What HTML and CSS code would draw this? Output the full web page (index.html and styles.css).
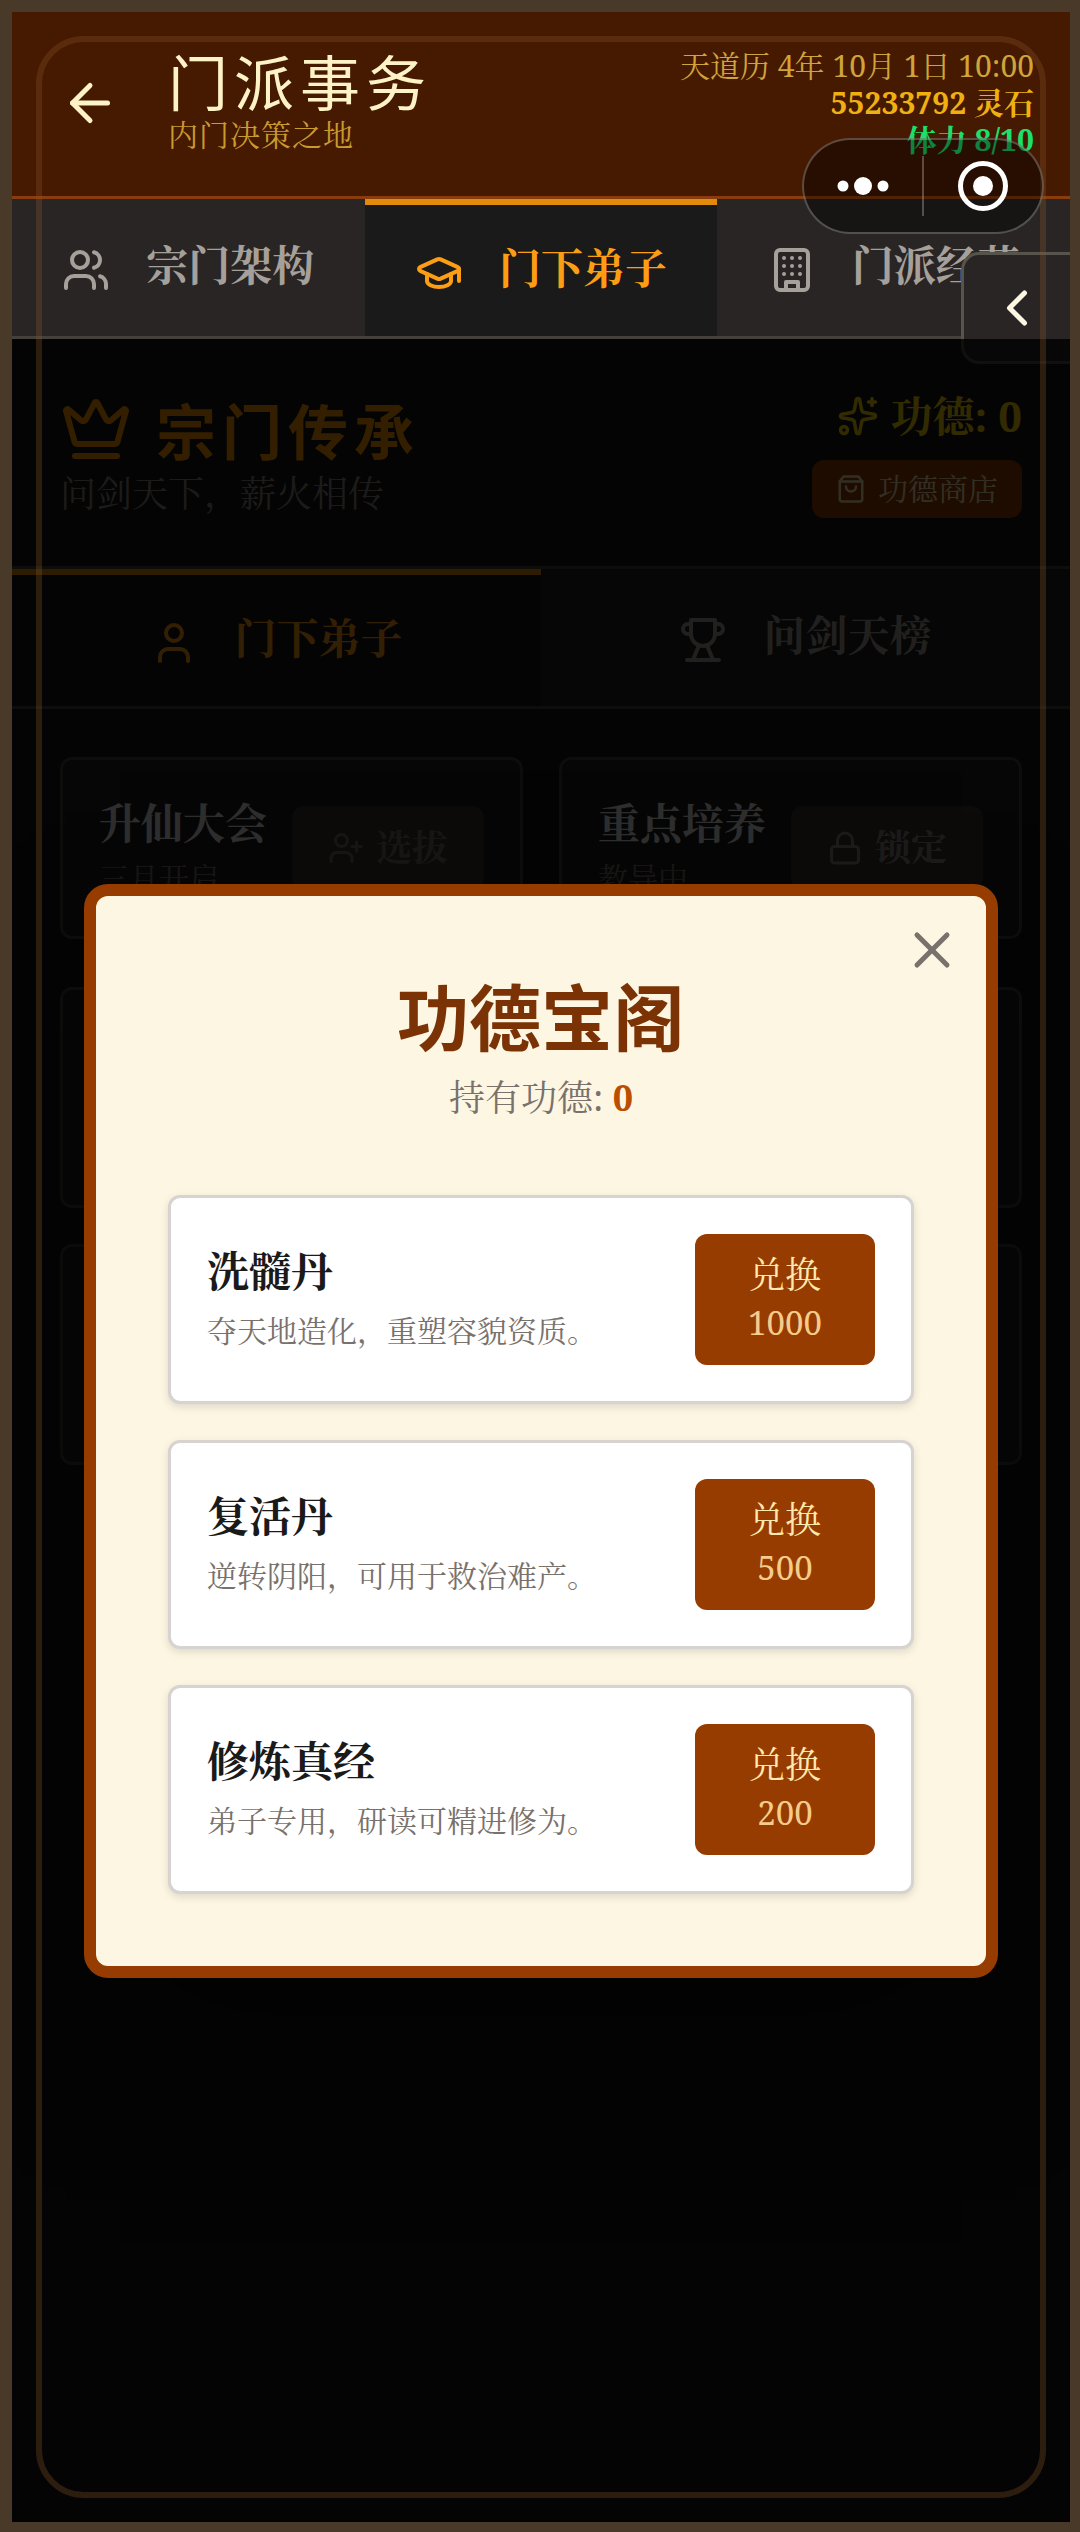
FILE: index.html
```
<!DOCTYPE html>
<html lang="zh-CN">
<head>
    <meta charset="UTF-8">
    <meta name="viewport" content="width=device-width, initial-scale=1.0">
    <title>门派事务</title>
    <link rel="stylesheet" href="styles.css">
</head>
<body>
    <div class="app">
        <header class="header">
            <button class="back-button" aria-label="返回">
                <svg class="icon icon-lg" viewBox="0 0 24 24"><path d="m12 19-7-7 7-7"/><path d="M19 12H5"/></svg>
            </button>
            <div class="header-title">
                <h1>门派事务</h1>
                <p>内门决策之地</p>
            </div>
            <div class="status">
                <div class="date">天道历 4年 10月 1日 10:00</div>
                <div class="stones">55233792 灵石</div>
                <div class="energy">体力 8/10</div>
            </div>
        </header>

        <nav class="tabs">
            <button class="tab">
                <svg class="icon" viewBox="0 0 24 24"><path d="M16 21v-2a4 4 0 0 0-4-4H6a4 4 0 0 0-4 4v2"/><circle cx="9" cy="7" r="4"/><path d="M22 21v-2a4 4 0 0 0-3-3.87"/><path d="M16 3.13a4 4 0 0 1 0 7.75"/></svg>
                <span>宗门架构</span>
            </button>
            <button class="tab active">
                <svg class="icon" viewBox="0 0 24 24"><path d="M21.42 10.922a1 1 0 0 0-.019-1.838L12.83 5.18a2 2 0 0 0-1.66 0L2.6 9.08a1 1 0 0 0 0 1.832l8.57 3.908a2 2 0 0 0 1.66 0z"/><path d="M22 10v6"/><path d="M6 12.5V16a6 3 0 0 0 12 0v-3.5"/></svg>
                <span>门下弟子</span>
            </button>
            <button class="tab">
                <svg class="icon" viewBox="0 0 24 24"><rect x="4" y="2" width="16" height="20" rx="2"/><path d="M9 22v-4h6v4"/><path d="M8 6h.01M16 6h.01M12 6h.01M12 10h.01M12 14h.01M16 10h.01M16 14h.01M8 10h.01M8 14h.01"/></svg>
                <span>门派经营</span>
            </button>
        </nav>

        <main class="main">
            <section class="hero">
                <div class="hero-info">
                    <h2>
                        <svg class="icon icon-xl" viewBox="0 0 24 24"><path d="M11.562 3.266a.5.5 0 0 1 .876 0L15.39 8.87a1 1 0 0 0 1.516.294L21.183 5.5a.5.5 0 0 1 .798.519l-2.834 10.246a1 1 0 0 1-.956.734H5.81a1 1 0 0 1-.957-.734L2.02 6.02a.5.5 0 0 1 .798-.519l4.276 3.664a1 1 0 0 0 1.516-.294z"/><path d="M5 21h14"/></svg>
                        <span>宗门传承</span>
                    </h2>
                    <p>问剑天下，薪火相传</p>
                </div>
                <div class="merit">
                    <div class="merit-value">
                        <svg class="icon icon-md" viewBox="0 0 24 24"><path d="M11.017 2.814a1 1 0 0 1 1.966 0l1.051 5.558a2 2 0 0 0 1.594 1.594l5.558 1.051a1 1 0 0 1 0 1.966l-5.558 1.051a2 2 0 0 0-1.594 1.594l-1.051 5.558a1 1 0 0 1-1.966 0l-1.051-5.558a2 2 0 0 0-1.594-1.594l-5.558-1.051a1 1 0 0 1 0-1.966l5.558-1.051a2 2 0 0 0 1.594-1.594z"/><path d="M20 2v4"/><path d="M22 4h-4"/><circle cx="4" cy="20" r="2"/></svg>
                        <span>功德: 0</span>
                    </div>
                    <button class="shop-button">
                        <svg class="icon icon-xs" viewBox="0 0 24 24"><path d="M6 2 3 6v14a2 2 0 0 0 2 2h14a2 2 0 0 0 2-2V6l-3-4Z"/><path d="M3 6h18"/><path d="M16 10a4 4 0 0 1-8 0"/></svg>
                        <span>功德商店</span>
                    </button>
                </div>
            </section>

            <div class="tabs sub-tabs">
                <button class="tab active">
                    <svg class="icon" viewBox="0 0 24 24"><path d="M19 21v-2a4 4 0 0 0-4-4H9a4 4 0 0 0-4 4v2"/><circle cx="12" cy="7" r="4"/></svg>
                    <span>门下弟子</span>
                </button>
                <button class="tab">
                    <svg class="icon" viewBox="0 0 24 24"><path d="M6 9H4.500a2.500 2.500 0 0 1 0-5H6"/><path d="M18 9h1.500a2.500 2.500 0 0 0 0-5H18"/><path d="M4 22h16"/><path d="M10 14.660 7 22"/><path d="M14 14.660 17 22"/><path d="M18 2H6v7a6 6 0 0 0 12 0V2Z"/></svg>
                    <span>问剑天榜</span>
                </button>
            </div>

            <div class="content">
                <div class="action-grid">
                    <div class="card">
                        <div class="card-text">
                            <h3>升仙大会</h3>
                            <p>三月开启</p>
                        </div>
                        <button class="card-button" disabled>
                            <svg class="icon icon-sm" viewBox="0 0 24 24"><path d="M16 21v-2a4 4 0 0 0-4-4H6a4 4 0 0 0-4 4v2"/><circle cx="9" cy="7" r="4"/><path d="M19 8v6"/><path d="M22 11h-6"/></svg>
                            <span>选拔</span>
                        </button>
                    </div>
                    <div class="card">
                        <div class="card-text">
                            <h3>重点培养</h3>
                            <p>教导中</p>
                        </div>
                        <button class="card-button locked">
                            <svg class="icon icon-sm" viewBox="0 0 24 24"><rect x="3" y="11" width="18" height="11" rx="2"/><path d="M7 11V7a5 5 0 0 1 10 0v4"/></svg>
                            <span>锁定</span>
                        </button>
                    </div>
                </div>
                <div class="disciple-list">
                    <div class="disciple"></div>
                    <div class="disciple"></div>
                </div>
            </div>

            <div class="overlay">
                <div class="modal" role="dialog" aria-labelledby="shop-title">
                    <button class="close-button" aria-label="关闭">
                        <svg class="icon icon-lg" viewBox="0 0 24 24"><path d="M18 6 6 18"/><path d="m6 6 12 12"/></svg>
                    </button>
                    <h2 id="shop-title">功德宝阁</h2>
                    <p class="balance">持有功德: <b>0</b></p>
                    <div class="goods">
                        <div class="item">
                            <div class="item-text">
                                <h3>洗髓丹</h3>
                                <p>夺天地造化，重塑容貌资质。</p>
                            </div>
                            <button class="buy-button">兑换<small>1000</small></button>
                        </div>
                        <div class="item">
                            <div class="item-text">
                                <h3>复活丹</h3>
                                <p>逆转阴阳，可用于救治难产。</p>
                            </div>
                            <button class="buy-button">兑换<small>500</small></button>
                        </div>
                        <div class="item">
                            <div class="item-text">
                                <h3>修炼真经</h3>
                                <p>弟子专用，研读可精进修为。</p>
                            </div>
                            <button class="buy-button">兑换<small>200</small></button>
                        </div>
                    </div>
                </div>
            </div>
        </main>

        <button class="drawer-handle" aria-label="展开">
            <svg class="icon icon-lg" viewBox="0 0 24 24"><path d="m15 18-6-6 6-6"/></svg>
        </button>
        <div class="frame"></div>
        <div class="capsule">
            <button aria-label="更多">
                <svg class="capsule-icon" viewBox="0 0 60 60"><circle cx="10" cy="30" r="5.500"/><circle cx="30" cy="30" r="9"/><circle cx="50" cy="30" r="5.500"/></svg>
            </button>
            <button aria-label="退出">
                <svg class="capsule-icon" viewBox="0 0 60 60"><circle class="ring" cx="30" cy="30" r="22.500"/><circle cx="30" cy="30" r="10"/></svg>
            </button>
        </div>
    </div>
</body>
</html>
```
FILE: styles.css
```
* {
    box-sizing: border-box;
}
body {
    margin: 0;
    background-color: #483929;
    font-family: "Noto Serif", "Noto Serif CJK SC", "Liberation Serif", "Noto Sans CJK SC", serif;
    color: #1a1a1a;
}
h1, h2, h3, p {
    margin: 0;
}
button {
    margin: 0;
    padding: 0;
    border: none;
    background: none;
    color: inherit;
    font: inherit;
    cursor: pointer;
}
.icon {
    display: block;
    flex-shrink: 0;
    width: 48px;
    height: 48px;
    fill: none;
    stroke: currentColor;
    stroke-width: 2;
    stroke-linecap: round;
    stroke-linejoin: round;
}
.icon-xs {
    width: 30px;
    height: 30px;
}
.icon-sm {
    width: 36px;
    height: 36px;
}
.icon-md {
    width: 42px;
    height: 42px;
}
.icon-lg {
    width: 60px;
    height: 60px;
}
.icon-xl {
    width: 72px;
    height: 72px;
}
.app {
    position: relative;
    display: flex;
    flex-direction: column;
    min-height: 100vh;
    border: solid #483929;
    border-width: 12px 10px 10px 12px;
    background-color: #141414;
    overflow: hidden;
}

/* header */
.header {
    display: flex;
    align-items: center;
    padding: 35px 36px 38px 24px;
    border-bottom: 3px solid #8a3c0c;
    background-color: #461901;
}
.back-button {
    padding: 0 24px;
    color: #fef3c6;
}
.header-title {
    margin-left: 24px;
}
.header-title h1 {
    margin-bottom: 2px;
    font-family: "Noto Sans CJK SC", sans-serif;
    font-size: 60px;
    line-height: 61px;
    font-weight: 400;
    letter-spacing: 6px;
    color: #fef3c6;
}
.header-title p {
    font-size: 30px;
    line-height: 45px;
    letter-spacing: 1px;
    color: #c99b2f;
}
.status {
    margin-left: auto;
    font-size: 30px;
    line-height: 37px;
    text-align: right;
    white-space: nowrap;
}
.date {
    color: #cfa43b;
}
.stones {
    font-weight: bold;
    color: #efb112;
}
.energy {
    font-weight: bold;
    color: #1cdf6c;
}

/* tabs */
.tabs {
    display: flex;
    border-bottom: 3px solid #44403b;
}
.tab {
    flex: 1;
    display: flex;
    align-items: flex-end;
    justify-content: center;
    gap: 36px;
    height: 137px;
    padding-bottom: 42px;
    background-color: #292524;
    color: #a6a09b;
    font-size: 42px;
    line-height: 58px;
    font-weight: bold;
    white-space: nowrap;
}
.tab.active {
    padding-bottom: 39px;
    border-top: 6px solid #e08c0a;
    background-color: #1a1a1a;
    color: #fd9d14;
}

/* page */
.main {
    position: relative;
    flex: 1;
}
.hero {
    display: flex;
    justify-content: space-between;
    padding: 48px;
    border-bottom: 3px solid #44403b;
}
.hero-info h2 {
    display: flex;
    align-items: center;
    gap: 24px;
    font-family: "Noto Sans CJK SC", sans-serif;
    font-size: 60px;
    line-height: 84px;
    letter-spacing: 6px;
    color: #fe9a00;
}
.hero-info p {
    font-size: 36px;
    line-height: 45px;
    color: #8c8681;
}
.merit {
    display: flex;
    flex-direction: column;
    align-items: flex-end;
    gap: 15px;
}
.merit-value {
    display: flex;
    align-items: center;
    gap: 12px;
    font-size: 42px;
    line-height: 58px;
    font-weight: bold;
    color: #fad000;
}
.shop-button {
    display: flex;
    align-items: center;
    gap: 12px;
    padding: 0 24px;
    border-radius: 12px;
    background-color: #973c00;
    color: #fee6b0;
    font-size: 30px;
    line-height: 58px;
}
.sub-tabs .tab {
    background-color: #1e1e1e;
}
.sub-tabs .tab.active {
    background-color: #141414;
}
.content {
    padding: 48px;
}
.action-grid {
    display: grid;
    grid-template-columns: 1fr 1fr;
    gap: 36px;
}
.card {
    display: flex;
    align-items: center;
    justify-content: space-between;
    padding: 33px 36px;
    border: 3px solid #44403b;
    border-radius: 12px;
    background-color: #1e1e1e;
    white-space: nowrap;
}
.card h3 {
    font-size: 42px;
    line-height: 60px;
    color: #e7e5e4;
}
.card p {
    font-size: 30px;
    line-height: 50px;
    color: #79716b;
}
.card-button {
    display: flex;
    align-items: center;
    gap: 12px;
    padding: 12px 36px;
    border-radius: 12px;
    background-color: #3e3832;
    color: #79716b;
    font-size: 36px;
    font-weight: bold;
    line-height: 60px;
}
.card-button.locked {
    color: #8c8681;
}
.disciple-list {
    display: flex;
    flex-direction: column;
    gap: 36px;
    margin-top: 48px;
}
.disciple {
    height: 221px;
    border: 3px solid #44403b;
    border-radius: 12px;
    background-color: #1e1e1e;
}

/* merit shop */
.overlay {
    position: absolute;
    inset: 0;
    z-index: 3;
    display: flex;
    align-items: center;
    justify-content: center;
    padding: 72px;
    background-color: rgba(0, 0, 0, 0.8);
}
.modal {
    position: relative;
    width: 100%;
    padding: 72px;
    border: 12px solid #973c00;
    border-radius: 24px;
    background-color: #fdf6e3;
    box-shadow: 0 75px 150px -36px rgba(0, 0, 0, 0.5);
}
.close-button {
    position: absolute;
    top: 24px;
    right: 24px;
    color: #79716b;
}
.modal h2 {
    margin-bottom: 8px;
    font-family: "Noto Sans CJK SC", sans-serif;
    font-size: 72px;
    line-height: 92px;
    text-align: center;
    color: #7b3306;
}
.balance {
    font-size: 36px;
    line-height: 60px;
    text-align: center;
    color: #79716b;
}
.balance b {
    color: #bb4d00;
}
.goods {
    display: flex;
    flex-direction: column;
    gap: 36px;
    margin-top: 67px;
}
.item {
    display: flex;
    align-items: center;
    justify-content: space-between;
    padding: 36px;
    border: 3px solid #d6d3d1;
    border-radius: 12px;
    background-color: #fff;
    box-shadow: 0 3px 9px rgba(0, 0, 0, 0.12);
}
.item h3 {
    font-size: 42px;
    line-height: 64px;
}
.item p {
    font-size: 30px;
    line-height: 56px;
    color: #79716b;
}
.buy-button {
    min-width: 180px;
    padding: 17px 24px 18px;
    border-radius: 12px;
    background-color: #973c00;
    color: #fee9b0;
    font-size: 36px;
    line-height: 48px;
}
.buy-button small {
    display: block;
    font-size: 33px;
    color: #f5cc8b;
}

/* things that float over the page */
.drawer-handle {
    position: absolute;
    top: 240px;
    right: 0;
    z-index: 2;
    padding: 23px;
    border: 3px solid #57534d;
    border-right: none;
    border-radius: 18px 0 0 18px;
    background-color: #292524;
    color: #fdf6e3;
}
.frame {
    position: absolute;
    inset: 24px;
    z-index: 4;
    border: 6px solid rgba(139, 90, 43, 0.3);
    border-radius: 48px;
    pointer-events: none;
}
.capsule {
    position: absolute;
    top: 126px;
    right: 26px;
    z-index: 5;
    display: flex;
    align-items: center;
    width: 242px;
    height: 96px;
    border: 2px solid rgba(255, 255, 255, 0.25);
    border-radius: 48px;
    background-color: rgba(0, 0, 0, 0.42);
}
.capsule button {
    flex: 1;
    display: flex;
    justify-content: center;
}
.capsule button + button {
    border-left: 2px solid rgba(255, 255, 255, 0.25);
}
.capsule-icon {
    width: 60px;
    height: 60px;
    fill: #fff;
}
.capsule-icon .ring {
    fill: none;
    stroke: #fff;
    stroke-width: 5;
}
```
